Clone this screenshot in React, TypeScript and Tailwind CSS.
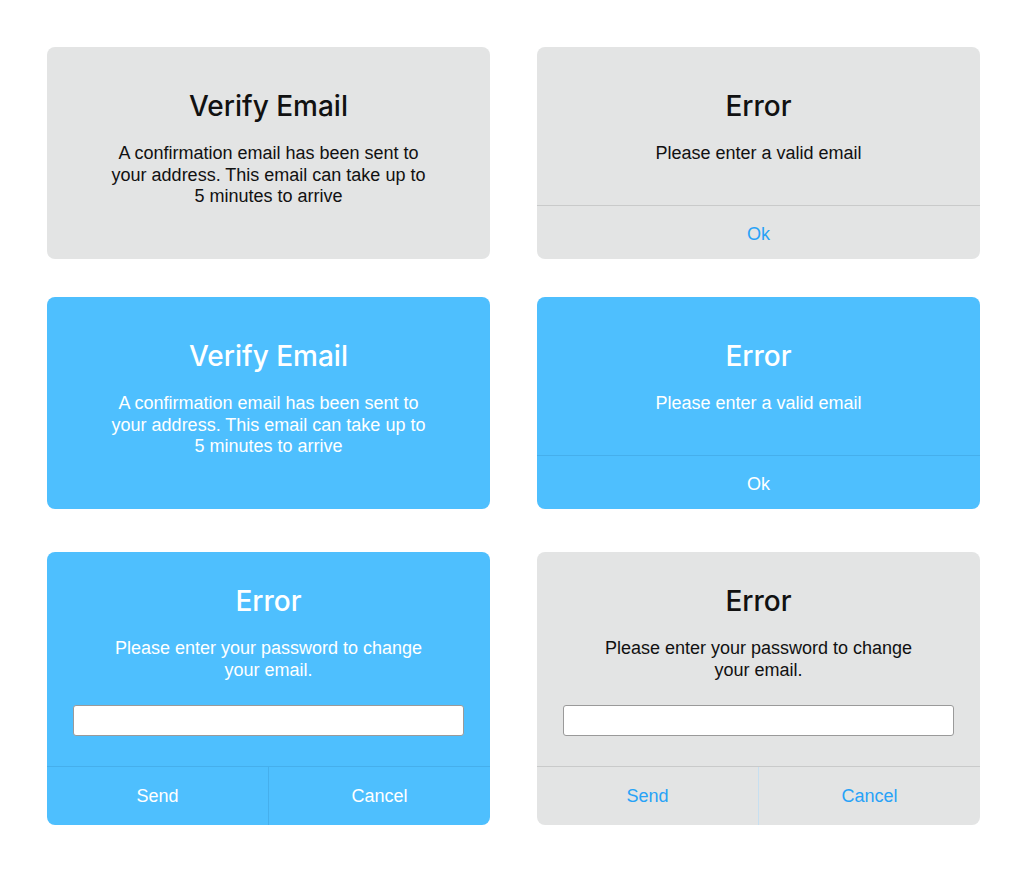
import React from 'react';

type Variant = 'grey' | 'blue';

const styles = {
  grey: {
    card: 'bg-[#e3e4e4] text-[#111]',
    line: 'border-[#c9caca]',
    divider: 'border-[#c7dff0]',
    action: 'text-[#27a2f7]',
  },
  blue: {
    card: 'bg-[#4ebffe] text-white',
    line: 'border-[#45afec]',
    divider: 'border-[#45afec]',
    action: 'text-white',
  },
};

const Title = ({ children }: { children: React.ReactNode }) => (
  <h2 className="text-[28px] leading-[34px] font-medium font-['Inter',sans-serif]">{children}</h2>
);

const Body = ({ children }: { children: React.ReactNode }) => (
  <p className="text-[18px] leading-[21.5px] mt-[20px]">{children}</p>
);

const VerifyCard = ({ variant }: { variant: Variant }) => (
  <div className={`h-[212px] rounded-[8px] text-center pt-[42px] ${styles[variant].card}`}>
    <Title>Verify Email</Title>
    <Body>
      A confirmation email has been sent to
      <br />
      your address. This email can take up to
      <br />
      5 minutes to arrive
    </Body>
  </div>
);

const ErrorCard = ({ variant }: { variant: Variant }) => {
  const s = styles[variant];
  return (
    <div className={`h-[212px] rounded-[8px] text-center flex flex-col overflow-hidden ${s.card}`}>
      <div className="flex-1 pt-[42px]">
        <Title>Error</Title>
        <Body>Please enter a valid email</Body>
      </div>
      <button className={`h-[54px] pt-[3px] border-t ${s.line} text-[18px] ${s.action}`}>Ok</button>
    </div>
  );
};

const PasswordCard = ({ variant }: { variant: Variant }) => {
  const s = styles[variant];
  return (
    <div className={`h-[273px] rounded-[8px] text-center flex flex-col overflow-hidden ${s.card}`}>
      <div className="flex-1 pt-[32px] px-[26px]">
        <Title>Error</Title>
        <Body>
          Please enter your password to change
          <br />
          your email.
        </Body>
        <input className="mt-[24px] w-full h-[31px] bg-white rounded-[3px] border border-[#9a9a9a] outline-none" />
      </div>
      <div className={`h-[59px] border-t ${s.line} flex text-[18px]`}>
        <button className={`flex-1 border-r ${s.divider} ${s.action}`}>Send</button>
        <button className={`flex-1 ${s.action}`}>Cancel</button>
      </div>
    </div>
  );
};

export default function App() {
  return (
    <div className="w-[1024px] h-[873px] bg-white font-['Liberation_Sans',Arial,sans-serif] pt-[47px] pl-[47px]">
      <div className="grid grid-cols-[443px_443px] gap-x-[47px]">
        <VerifyCard variant="grey" />
        <ErrorCard variant="grey" />
      </div>
      <div className="grid grid-cols-[443px_443px] gap-x-[47px] mt-[38px]">
        <VerifyCard variant="blue" />
        <ErrorCard variant="blue" />
      </div>
      <div className="grid grid-cols-[443px_443px] gap-x-[47px] mt-[43px]">
        <PasswordCard variant="blue" />
        <PasswordCard variant="grey" />
      </div>
    </div>
  );
}
